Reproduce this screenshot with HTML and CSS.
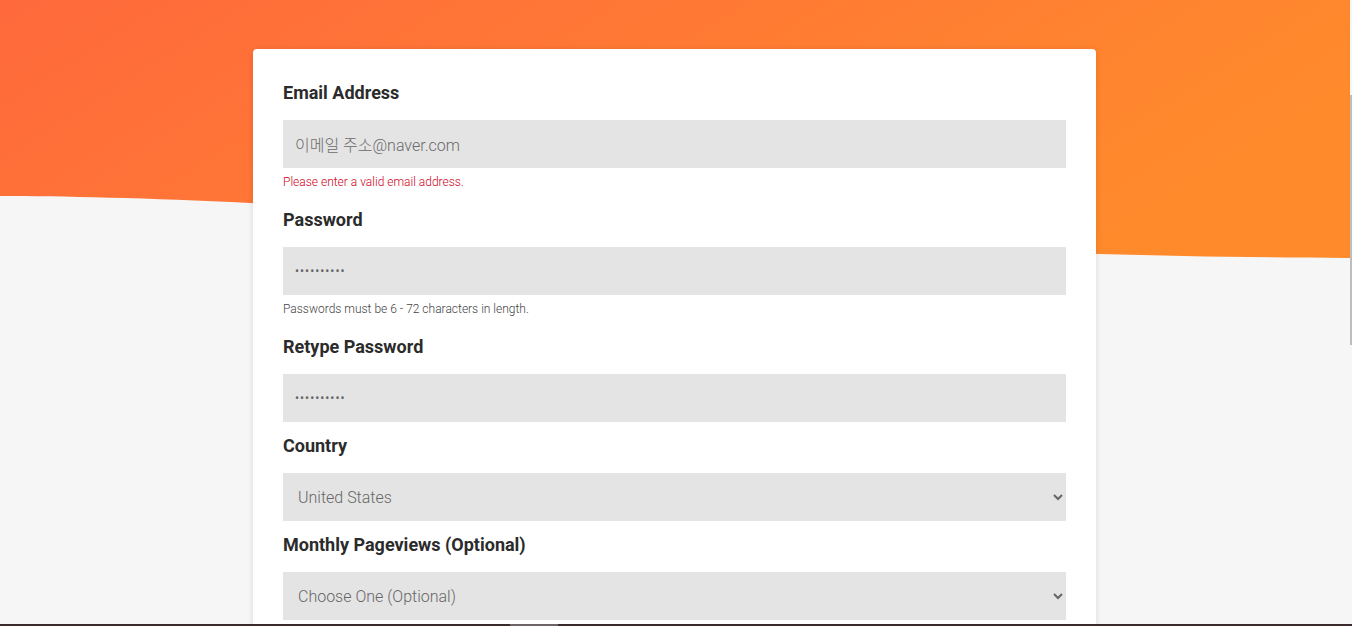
FILE: index.html
```html
<!DOCTYPE html>
<html lang="en">
<head>
    <meta charset="UTF-8">
    <meta name="viewport" content="width=device-width, initial-scale=1.0">
    <title>Sign Up</title>
    <link rel="stylesheet" href="styles.css">
</head>
<body>
    <div class="hero">
        <svg class="wave" viewBox="0 0 1350 260" preserveAspectRatio="none">
            <defs>
                <linearGradient id="orange" x1="0" y1="0" x2="1" y2="0.3">
                    <stop offset="0" stop-color="#ff693c"/>
                    <stop offset="1" stop-color="#ff8a2c"/>
                </linearGradient>
            </defs>
            <path d="M0,0 H1350 V258 C950,256 700,236 250,203 C150,198 60,196 0,196 Z" fill="url(#orange)"/>
        </svg>
    </div>

    <div class="page">
        <div class="card">
            <form id="signup-form">
                <div class="form-group">
                    <label for="email">Email Address</label>
                    <input type="text" id="email" name="email" placeholder="이메일 주소@naver.com">
                    <p class="hint error">Please enter a valid email address.</p>
                </div>
                <div class="form-group">
                    <label for="password">Password</label>
                    <input type="password" id="password" name="password" value="abcdefghij">
                    <p class="hint">Passwords must be 6 - 72 characters in length.</p>
                </div>
                <div class="form-group">
                    <label for="password2">Retype Password</label>
                    <input type="password" id="password2" name="password2" value="abcdefghij">
                </div>
                <div class="form-group">
                    <label for="country">Country</label>
                    <select id="country" name="country">
                        <option>United States</option>
                        <option>Korea, Republic of</option>
                    </select>
                </div>
                <div class="form-group">
                    <label for="pageviews">Monthly Pageviews (Optional)</label>
                    <select id="pageviews" name="pageviews">
                        <option>Choose One (Optional)</option>
                        <option>Under 10,000</option>
                    </select>
                </div>
            </form>
        </div>
    </div>

    <div class="scrollbar"><div class="thumb"></div></div>
    <div class="taskbar"><div class="task"></div></div>
</body>
</html>
```

FILE: styles.css
```css
html, body {
    height: 100%;
}
body {
    font-family: Roboto, "Noto Sans CJK KR", sans-serif;
    margin: 0;
    background-color: #f6f6f6;
    overflow: hidden;
    position: relative;
    color: #333;
}
.hero {
    position: absolute;
    top: 0;
    left: 0;
    width: 1350px;
    height: 260px;
}
.wave {
    display: block;
    width: 100%;
    height: 100%;
}
.page {
    position: relative;
    width: 1350px;
    padding-top: 49px;
}
.card {
    width: 783px;
    margin-left: 253px;
    padding: 32px 30px 30px;
    background: white;
    border-radius: 4px;
    box-shadow: 0 1px 6px rgba(0, 0, 0, 0.12);
}
.form-group {
    margin-bottom: 12px;
}
label {
    display: block;
    font-size: 18px;
    font-weight: 700;
    line-height: 24px;
    margin-bottom: 15px;
    color: #2b2b2b;
}
input[type="text"], input[type="password"], select {
    display: block;
    width: 100%;
    height: 48px;
    box-sizing: border-box;
    margin: 0;
    padding: 0 12px;
    border: none;
    border-radius: 0;
    background-color: #e4e4e4;
    font-family: Roboto, "Noto Sans CJK KR", sans-serif;
    font-size: 16px;
    font-weight: 300;
    color: #666;
    outline: none;
}
input[type="text"] {
    padding-top: 2px;
}
input::placeholder {
    color: #6a6a6a;
}
input[type="password"] {
    font-size: 12px;
    font-weight: 400;
    letter-spacing: 1px;
    color: #666;
}
select {
    padding: 0 14px 0 11px;
}
.hint {
    margin: 7px 0 19px;
    font-size: 12px;
    font-weight: 300;
    line-height: 14px;
    color: #444;
}
.hint.error {
    color: #d0021b;
}
.scrollbar {
    position: absolute;
    top: 0;
    right: 0;
    width: 2px;
    height: 100%;
    background: #f6f6f6;
}
.thumb {
    position: absolute;
    top: 95px;
    left: 0;
    width: 2px;
    height: 250px;
    background: #bdbdbd;
}
.taskbar {
    position: absolute;
    left: 0;
    bottom: 0;
    width: 100%;
    height: 2px;
    background: #3a2a2b;
}
.task {
    position: absolute;
    left: 510px;
    width: 48px;
    height: 2px;
    background: #6b6566;
}
```
